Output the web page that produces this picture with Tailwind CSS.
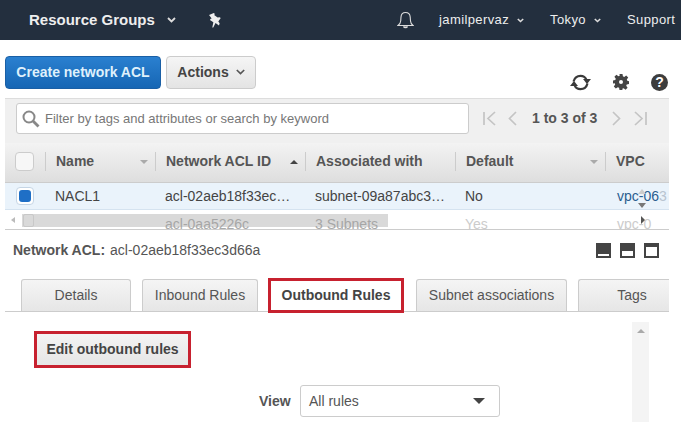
<!DOCTYPE html>
<html lang="en">
<head>
  <meta charset="UTF-8" />
  <title>Network ACLs</title>
  <script src="https://cdn.jsdelivr.net/npm/@tailwindcss/browser@4"></script>
</head>
<body class="bg-white h-[422px] w-[681px] overflow-hidden font-['Liberation_Sans',Arial,sans-serif] text-[#444]">

  <!-- Top nav -->
  <div class="h-[40px] bg-[#232f3e] flex items-center text-[#eee] pl-[29px]">
    <span class="text-[15px] font-bold w-[136px] shrink-0 whitespace-nowrap">Resource Groups</span>
    <svg class="ml-[2px] w-[9px] h-[6px] shrink-0" viewBox="0 0 9 6" fill="none" stroke="#ddd" stroke-width="1.8"><path d="M1 1l3.5 3.5L8 1"/></svg>
    <svg class="ml-[32px] w-[14px] h-[15px] shrink-0" viewBox="0 0 14 15" fill="#eee"><path d="M2 1l5-1 1 1-1 1 3 3 2 0 1 1-3 3 1 2-1 2-3-3-3 4-1 0 2-5-3-3 1-1 1 0z" transform="rotate(-10 7 7)"/></svg>
    <svg class="ml-[175px] w-[17px] h-[18px] shrink-0" viewBox="0 0 17 18" fill="none" stroke="#ddd" stroke-width="1.1"><path d="M1 14.5c1.5-1 2.5-2 2.7-4.5l.3-4c.2-2.800 2-4.500 4.500-4.500S13 3.200 13.200 6l.3 4c.2 2.500 1.200 3.500 2.500 4.500z"/><path d="M6.500 15.500c.5 1.500 3.500 1.500 4 0" fill="#ddd"/></svg>
    <span class="ml-[25px] text-[13px] tracking-[0.4px] w-[78px] shrink-0">jamilpervaz</span>
    <svg class="w-[7px] h-[5px] shrink-0" viewBox="0 0 7 5" fill="none" stroke="#ddd" stroke-width="1.600"><path d="M.8 1l2.700 2.500L6.200 1"/></svg>
    <span class="ml-[26px] text-[13px] tracking-[0.4px] w-[44px] shrink-0">Tokyo</span>
    <svg class="w-[7px] h-[5px] shrink-0" viewBox="0 0 7 5" fill="none" stroke="#ddd" stroke-width="1.600"><path d="M.8 1l2.700 2.500L6.200 1"/></svg>
    <span class="ml-[26px] text-[13px] tracking-[0.4px] whitespace-nowrap">Support</span>
  </div>

  <!-- Toolbar -->
  <div class="flex pl-[5px] pt-[16px] h-[58px]">
    <button class="w-[156px] h-[33px] rounded-[4px] bg-gradient-to-b from-[#2a80d0] to-[#1666b4] border border-[#1a5fa5] text-[#dff0fb] text-[14px] font-bold">Create network ACL</button>
    <button class="ml-[5px] w-[90px] h-[33px] rounded-[4px] bg-gradient-to-b from-[#f5f5f5] to-[#e4e4e4] border border-[#ccc] text-[#444] text-[14px] font-bold flex items-center justify-center gap-[7px]">
      Actions
      <svg class="w-[9px] h-[6px] mb-[2px]" viewBox="0 0 9 6" fill="none" stroke="#555" stroke-width="1.700"><path d="M.8 1l3.700 3.500L8.200 1"/></svg>
    </button>
    <div class="ml-auto flex items-center gap-[22px] pr-[13px] pt-[10px]">
      <svg class="w-[21px] h-[19px]" viewBox="0 0 21 19" fill="none" stroke="#3a3a3a" stroke-width="2.200">
        <path d="M3.500 8.500C4.500 4.800 7.200 2.800 10.500 2.800c2.700 0 5 1.500 6 4"/>
        <path d="M17.500 10.500c-1 3.700-3.700 5.700-7 5.700-2.700 0-5-1.500-6-4"/>
        <path d="M13 6h8l-4 5z" fill="#3a3a3a" stroke="none"/>
        <path d="M0 13h8l-4-5z" fill="#3a3a3a" stroke="none"/>
      </svg>
      <svg class="w-[16px] h-[16px]" viewBox="0 0 16 16" fill="#444"><path fill-rule="evenodd" d="M6.500 0h3l.4 2.300 1.300.6L13.200 1.500l2 2-1.400 2 .5 1.300L16 7.200v2.800l-2.300.4-.5 1.300 1.400 2-2 2-2-1.400-1.300.5L9.500 16h-3l-.4-2.300-1.300-.5-2 1.400-2-2 1.400-2-.5-1.300L0 9.500v-3l2.300-.4.500-1.300-1.400-2 2-2 2 1.400 1.300-.5zM8 6a2 2 0 100 4 2 2 0 000-4z"/></svg>
      <div class="w-[17px] h-[17px] rounded-full bg-[#3d3d3d] text-white text-[14px] leading-[17px] font-bold text-center">?</div>
    </div>
  </div>

  <!-- Table panel -->
  <div class="relative ml-[5px] w-[664px]">
    <div class="h-[45px] bg-[#f0f0f0] border-t border-[#ddd] flex items-start pl-[11px] pt-[4px]">
      <div class="w-[453px] h-[31px] bg-white border border-[#ccc] rounded-[3px] flex items-center pl-[5px] text-[#777]">
        <svg class="w-[18px] h-[18px]" viewBox="0 0 18 18" fill="none" stroke="#888" stroke-width="2"><circle cx="7" cy="7" r="5.500"/><path d="M11 11l5.500 5.500" stroke-width="2.800"/></svg>
        <span class="ml-[5px] text-[13px] whitespace-nowrap">Filter by tags and attributes or search by keyword</span>
      </div>
      <div class="flex items-center h-[31px] ml-[14px]">
        <svg class="w-[14px] h-[15px]" viewBox="0 0 14 15" fill="none" stroke="#c4c4c4" stroke-width="1.700"><path d="M1 1v13M12 1L5 7.500l7 6.500"/></svg>
        <svg class="ml-[11px] w-[9px] h-[15px]" viewBox="0 0 9 15" fill="none" stroke="#c4c4c4" stroke-width="1.700"><path d="M8 1L1.500 7.500 8 14"/></svg>
        <span class="ml-[15px] text-[14px] font-bold text-[#555] whitespace-nowrap">1 to 3 of 3</span>
        <svg class="ml-[15px] w-[9px] h-[15px]" viewBox="0 0 9 15" fill="none" stroke="#c4c4c4" stroke-width="1.700"><path d="M1 1l6.500 6.500L1 14"/></svg>
        <svg class="ml-[12px] w-[14px] h-[15px]" viewBox="0 0 14 15" fill="none" stroke="#c4c4c4" stroke-width="1.700"><path d="M13 1v13M2 1l7 6.500L2 14"/></svg>
      </div>
    </div>

    <!-- Header row -->
    <div class="h-[40px] pb-[2px] grid grid-cols-[40px_110px_150px_150px_150px_64px] items-center bg-gradient-to-b from-[#f3f3f3] to-[#dedede] border-b border-[#ccc] text-[14px] font-bold text-[#555]">
      <div class="pl-[10px]"><div class="w-[19px] h-[19px] rounded-[4px] border border-[#ccc] bg-[#f7f7f7]"></div></div>
      <div class="h-[19px] border-l border-[#ccc] pl-[10px] flex items-center justify-between pr-[7px]">Name<span class="w-0 h-0 border-x-[4px] border-x-transparent border-t-[4px] border-t-[#aaa]"></span></div>
      <div class="h-[19px] border-l border-[#ccc] pl-[10px] flex items-center justify-between pr-[7px] whitespace-nowrap">Network ACL ID<span class="w-0 h-0 border-x-[4px] border-x-transparent border-b-[4px] border-b-[#444]"></span></div>
      <div class="h-[19px] border-l border-[#ccc] pl-[10px] flex items-center whitespace-nowrap">Associated with</div>
      <div class="h-[19px] border-l border-[#ccc] pl-[10px] flex items-center justify-between pr-[7px]">Default<span class="w-0 h-0 border-x-[4px] border-x-transparent border-t-[4px] border-t-[#aaa]"></span></div>
      <div class="h-[19px] border-l border-[#ccc] pl-[10px] flex items-center">VPC</div>
    </div>

    <!-- Selected row -->
    <div class="h-[27px] grid grid-cols-[40px_110px_150px_150px_150px_64px] items-center bg-[#eaf3fb] border-b border-[#d5e3f0] text-[14px] text-[#444]">
      <div class="pl-[11px]"><div class="w-[18px] h-[18px] rounded-[4px] border border-[#c5d5e5] bg-white p-[2px]"><div class="w-full h-full rounded-[3px] bg-[#1f6fc6]"></div></div></div>
      <div class="pl-[10px]">NACL1</div>
      <div class="pl-[10px] whitespace-nowrap">acl-02aeb18f33ec…</div>
      <div class="pl-[10px] whitespace-nowrap">subnet-09a87abc3…</div>
      <div class="pl-[10px]">No</div>
      <div class="pl-[12px] whitespace-nowrap text-[#2a5d8f]">vpc-06<span class="text-[#b8c4d0]">3</span></div>
    </div>

    <!-- Second row, dimmed behind the scrollbar -->
    <div class="h-[19px] mt-[1px] grid grid-cols-[40px_110px_150px_150px_150px_64px] items-start overflow-hidden border-b border-[#ccc] text-[14px] text-[#ccc]">
      <div></div>
      <div></div>
      <div class="pl-[10px] whitespace-nowrap leading-[26px] text-[#aaa]">acl-0aa5226c</div>
      <div class="pl-[10px] whitespace-nowrap leading-[26px] text-[#aaa]">3 Subnets</div>
      <div class="pl-[10px] leading-[26px]">Yes</div>
      <div class="pl-[12px] leading-[26px] whitespace-nowrap">vpc-0</div>
    </div>

    <!-- Horizontal scrollbar + resize handle overlays -->
    <div class="absolute left-[17px] top-[116px] w-[366px] h-[13px] bg-[#a0a0a0]/40"></div>
    <div class="absolute left-[18px] top-[116px] w-[11px] h-[13px] border border-[#c8c8c8] rounded-[2px]"></div>
    <div class="absolute left-[6px] top-[119px] w-0 h-0 border-y-[3px] border-y-transparent border-r-[4px] border-r-[#bbb]"></div>
    <div class="absolute left-[636px] top-[118px] w-0 h-0 border-y-[4px] border-y-transparent border-l-[4px] border-l-[#555]"></div>
    <div class="absolute left-[633px] top-[91px] w-0 h-0 border-x-[4px] border-x-transparent border-b-[5px] border-b-[#ccc]"></div>
    <div class="absolute left-[633px] top-[105px] w-0 h-0 border-x-[4px] border-x-transparent border-t-[5px] border-t-[#777]"></div>
  </div>

  <!-- Detail header -->
  <div class="flex items-center h-[38px] pl-[13px] pr-[22px] pt-[2px] text-[14px]">
    <span class="font-bold text-[#555]">Network ACL:</span>
    <span class="ml-[5px] text-[#555]">acl-02aeb18f33ec3d66a</span>
    <div class="ml-auto flex gap-[9px]">
      <div class="w-[15px] h-[15px] bg-[#444] p-[2px] flex items-end"><div class="w-full h-[2px] bg-white"></div></div>
      <div class="w-[15px] h-[15px] bg-[#444] p-[2px] flex items-end"><div class="w-full h-[5px] bg-white"></div></div>
      <div class="w-[15px] h-[15px] bg-[#444] p-[2px] flex items-end"><div class="w-full h-[9px] bg-white"></div></div>
    </div>
  </div>

  <!-- Tabs -->
  <div class="ml-[5px] w-[664px] h-[33px] mt-[11px] border-b border-[#ccc] flex items-end text-[14px] text-[#555]">
    <div class="ml-[16px] w-[110px] h-[32px] shrink-0 flex items-center justify-center rounded-t-[3px] border border-b-0 border-[#ccc] bg-gradient-to-b from-[#f5f5f5] to-[#e6e6e6]">Details</div>
    <div class="ml-[11px] w-[116px] h-[32px] shrink-0 flex items-center justify-center rounded-t-[3px] border border-b-0 border-[#ccc] bg-gradient-to-b from-[#f5f5f5] to-[#e6e6e6]">Inbound Rules</div>
    <div class="ml-[10px] w-[136px] h-[35px] shrink-0 flex items-center justify-center border-[3px] border-[#c7212f] bg-white font-bold text-[#444] -mb-[2px]">Outbound Rules</div>
    <div class="ml-[12px] w-[151px] h-[32px] shrink-0 flex items-center justify-center rounded-t-[3px] border border-b-0 border-[#ccc] bg-gradient-to-b from-[#f5f5f5] to-[#e6e6e6]">Subnet associations</div>
    <div class="ml-[11px] w-[91px] h-[32px] shrink-0 flex items-center justify-center rounded-tl-[3px] border border-b-0 border-r-0 border-[#ccc] bg-gradient-to-b from-[#f5f5f5] to-[#e6e6e6] pl-[16px]">Tags</div>
  </div>

  <!-- Tab content -->
  <div class="relative h-[110px] pt-[19px]">
    <button class="ml-[34px] block w-[157px] h-[37px] border-[3px] border-[#c7212f] bg-gradient-to-b from-[#f3f3f3] to-[#e6e6e6] text-[14px] font-bold text-[#444]">Edit outbound rules</button>
    <div class="flex items-center mt-[17px]">
      <span class="ml-[259px] w-[41px] text-[14px] font-bold text-[#555]">View</span>
      <div class="w-[200px] h-[32px] border border-[#ccc] rounded-[3px] flex items-center justify-between pl-[8px] pr-[14px] text-[14px] text-[#555]">
        All rules
        <span class="w-0 h-0 border-x-[6px] border-x-transparent border-t-[6px] border-t-[#444]"></span>
      </div>
    </div>
    <!-- Panel scrollbar -->
    <div class="absolute left-[632px] top-[10px] w-[17px] h-[100px] bg-[#f4f4f4]">
      <div class="mx-auto mt-[7px] w-0 h-0 border-x-[4px] border-x-transparent border-b-[4px] border-b-[#aaa]"></div>
    </div>
  </div>

</body>
</html>
